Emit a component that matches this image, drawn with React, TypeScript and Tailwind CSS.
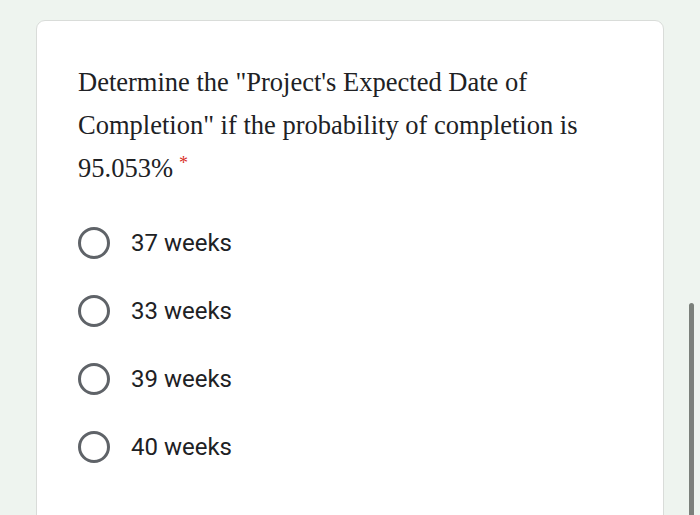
export default function App() {
  const options = ["37 weeks", "33 weeks", "39 weeks", "40 weeks"];
  return (
    <div className="relative h-[515px] w-[700px] overflow-hidden bg-[#eef4ef]">
      <div className="ml-[36px] mt-[20px] h-[520px] w-[628px] rounded-[9px] border border-[#d9dcd9] bg-white pl-[41px] pt-[40px]">
        <p className="font-['Liberation_Serif',serif] text-[26.5px] leading-[43px] text-[#202124]">
          Determine the "Project's Expected Date of
          <br />
          Completion" if the probability of completion is
          <br />
          95.053%
          <span className="relative -top-[8px] ml-[6px] text-[18px] text-[#d93025]">*</span>
        </p>
        <div className="mt-[34px] flex flex-col gap-[36px]">
          {options.map((o) => (
            <div key={o} className="flex h-[32px] items-center">
              <span className="block h-[32px] w-[32px] rounded-full border-[3px] border-[#5f6368]" />
              <span className="ml-[21px] font-['Roboto',sans-serif] text-[24px] text-[#202124]">{o}</span>
            </div>
          ))}
        </div>
      </div>
      <div className="absolute left-[689px] top-[303px] h-[230px] w-[5px] rounded-full bg-[#7b807b]" />
    </div>
  );
}
